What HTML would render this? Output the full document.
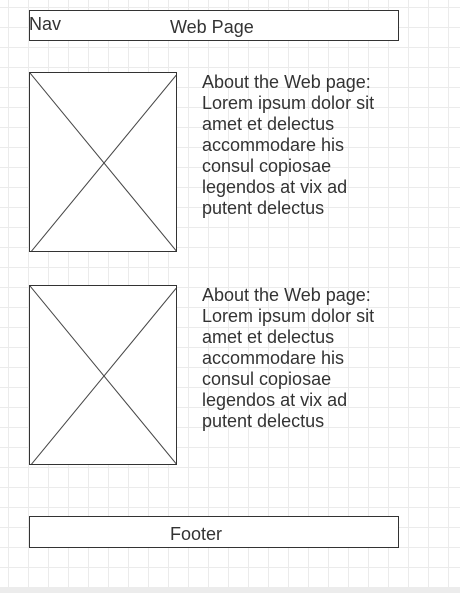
<!DOCTYPE html>
<html><head><style>
html,body{margin:0;padding:0}
body{width:460px;height:593px;position:relative;overflow:hidden;background-color:#fff;
background-image:linear-gradient(to right,#ebebeb 1px,transparent 1px),linear-gradient(to bottom,#ebebeb 1px,transparent 1px);
background-size:20px 20px;background-position:8px 7px;font-family:"Liberation Sans",sans-serif;color:#333}
.box{position:absolute;border:1px solid #333;background:#fff;box-sizing:border-box}
.t{position:absolute;font-size:18px;line-height:21px;color:#333}
.bar{position:absolute;left:0;top:587px;width:460px;height:6px;background:#ececec}
</style></head><body>
<div class="box" style="left:29px;top:10px;width:370px;height:31px"></div>
<div class="t" style="left:29px;top:14px">Nav</div>
<div class="t" style="left:170px;top:17px">Web Page</div>

<svg class="box" style="left:29px;top:72px;width:148px;height:180px" width="148" height="180"><line x1="0" y1="0" x2="148" y2="180" stroke="#444"/><line x1="148" y1="0" x2="0" y2="180" stroke="#444"/></svg>
<div class="t" style="left:202px;top:72px">About the Web page:<br>Lorem ipsum dolor sit<br>amet et delectus<br>accommodare his<br>consul copiosae<br>legendos at vix ad<br>putent delectus</div>

<svg class="box" style="left:29px;top:285px;width:148px;height:180px" width="148" height="180"><line x1="0" y1="0" x2="148" y2="180" stroke="#444"/><line x1="148" y1="0" x2="0" y2="180" stroke="#444"/></svg>
<div class="t" style="left:202px;top:285px">About the Web page:<br>Lorem ipsum dolor sit<br>amet et delectus<br>accommodare his<br>consul copiosae<br>legendos at vix ad<br>putent delectus</div>

<div class="box" style="left:29px;top:516px;width:370px;height:32px"></div>
<div class="t" style="left:170px;top:524px">Footer</div>
<div class="bar"></div>
</body></html>
